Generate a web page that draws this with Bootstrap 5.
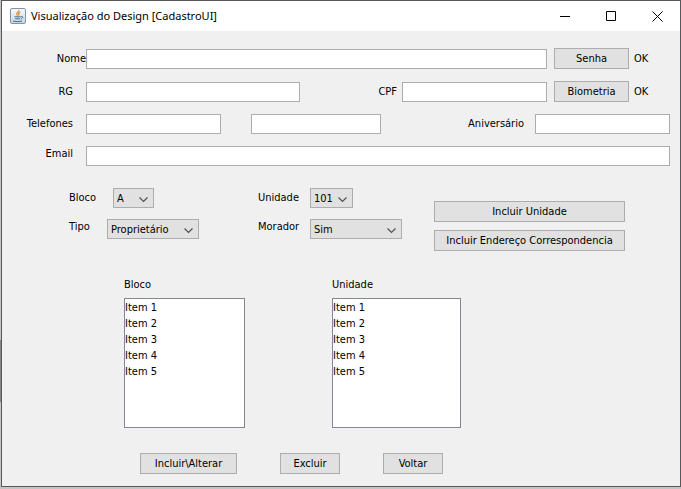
<!DOCTYPE html>
<html lang="pt-BR">
<head>
<meta charset="utf-8">
<meta name="viewport" content="width=device-width, initial-scale=1">
<title>Visualização do Design [CadastroUI]</title>
<link href="https://cdn.jsdelivr.net/npm/bootstrap@5.3.0/dist/css/bootstrap.min.css" rel="stylesheet">
<style>
body{background:linear-gradient(#c4c4c4 0 340px,#858585 340px 402px,#c4c4c4 402px);font:11px/16px Tahoma,"DejaVu Sans Condensed","DejaVu Sans",sans-serif;color:#000;padding:0 0 2px 1px}
.win{background:#f0f0f0;border:1px solid #56585a;min-height:calc(100vh - 2px)}
.titlebar{height:30px;background:#fff;font:11px/16px "Segoe UI","Noto Sans",sans-serif;padding-left:8px;gap:5px}
.caption-btn{width:46px;height:30px;border:0;background:none;padding:0}
.caption-btn svg{display:block;margin:auto}
.form-area{padding:17px 10px 0 0}
.lbl{width:84px;flex:none;padding-right:13px;text-align:right}
.lbl-tight{padding-right:0}
.win .form-control{height:20px;min-height:0;width:auto;min-width:0;border:1px solid #abadb3;border-radius:0;padding:0 3px;font-size:11px;background:#fff}
.win .btn{height:21px;border:1px solid #adadad;border-radius:0;background:#e1e1e1;color:#000;font-size:11px;line-height:16px;padding:2px 4px 1px}
.win .form-select{height:20px;border:1px solid #adadad;border-radius:0;font-size:11px;line-height:16px;color:#000;padding:1px 16px 0 3px;background:#e1e1e1 url("data:image/svg+xml,%3Csvg xmlns='http://www.w3.org/2000/svg' width='9' height='6'%3E%3Cpath d='M.5.5l4 4 4-4' fill='none' stroke='%23505050' stroke-width='1.2'/%3E%3C/svg%3E") no-repeat right 5px top 8px/9px 6px}
.win .side-btn{width:75px;margin-left:7px}
.ok{width:41px;flex:none;padding-left:5px}
.f-row{margin-top:12px}
.f-rg{flex:1 1 214px}
.f-cpf{flex:1 1 145px}
.f-tel{flex:1 1 135px}
.f-tel2{flex:1 1 130px}
.tel-gap{margin-right:30px}
.cpf-lbl{width:102px;flex:none;padding-right:5px}
.aniv-lbl{width:154px;flex:none;padding-right:11px}
.mid{padding:22px 55px 0 67px}
.mid-row{margin-top:11px}
.mid-left{width:189px}
.mid-right{width:176px}
.bloco-lbl{width:44px}
.tipo-lbl{width:38px}
.mid-lbl{width:52px}
.w-tipo{width:92px}
.w-bloco{width:41px}
.w-unid{width:43px}
.wide-btns{flex:1;padding-top:13px}
.lists{padding:26px 0 0 122px;gap:87px}
.lists label{display:block;margin-bottom:5px}
.listbox{display:block;height:130px;border:1px solid #828790;border-radius:0;background:#fff;padding:2px 0 0;overflow:hidden;color:#000;font-size:11px;outline:0}
.listbox option{padding:0;height:16px;min-height:16px;line-height:16px}
.lb-bloco{width:121px}
.lb-unid{width:129px}
.actions{padding:25px 0 12px 138px;gap:43px}
.w-alterar{width:97px}
.w-acao{width:60px}
</style>
<script src="https://cdn.jsdelivr.net/npm/bootstrap@5.3.0/dist/js/bootstrap.bundle.min.js"></script>
</head>
<body>
<div class="win d-flex flex-column">
  <header class="titlebar d-flex align-items-center">
    <svg width="16" height="16" viewBox="0 0 16 16" aria-hidden="true">
      <defs><linearGradient id="tile" x2="0" y2="1"><stop stop-color="#f8fafb"/><stop offset="1" stop-color="#c6d5df"/></linearGradient></defs>
      <rect x=".5" y=".5" width="15" height="15" rx="1.5" fill="url(#tile)" stroke="#8195a3"/>
      <path d="M8.800 2c.6 1.800-2.900 2.500-2.100 4.200.3.600.8.900.9 1.400M10.300 4c-1.600.7-2.200 1.400-1.500 2.200.4.500.1.900-.3 1.300" fill="none" stroke="#e8832a" stroke-width="1.200"/>
      <path d="M4.500 8.800h6.300M5.200 10.800h5M3 13c2.500.8 6.500.8 9 0M11.200 8.500c2.200-.4 2 1.800-.2 2.400" fill="none" stroke="#446b8e"/>
    </svg>
    <span>Visualização do Design [CadastroUI]</span>
    <div class="d-flex ms-auto">
      <button type="button" class="caption-btn" aria-label="Minimizar"><svg width="11" height="11"><path d="M0 5.500h10" stroke="#000"/></svg></button>
      <button type="button" class="caption-btn" aria-label="Maximizar"><svg width="11" height="11"><path d="M.5.500h9v9h-9z" fill="none" stroke="#000"/></svg></button>
      <button type="button" class="caption-btn" aria-label="Fechar"><svg width="11" height="11"><path d="M.5.500l10 10M10.500.500l-10 10" stroke="#000"/></svg></button>
    </div>
  </header>
  <form>
    <div class="form-area">
      <div class="d-flex align-items-center">
        <label class="lbl lbl-tight" for="nome">Nome</label>
        <input class="form-control flex-grow-1" id="nome" type="text">
        <button type="button" class="btn side-btn">Senha</button>
        <span class="ok">OK</span>
      </div>
      <div class="d-flex align-items-center f-row">
        <label class="lbl" for="rg">RG</label>
        <input class="form-control f-rg" id="rg" type="text">
        <label class="cpf-lbl text-end" for="cpf">CPF</label>
        <input class="form-control f-cpf" id="cpf" type="text">
        <button type="button" class="btn side-btn">Biometria</button>
        <span class="ok">OK</span>
      </div>
      <div class="d-flex align-items-center f-row">
        <label class="lbl" for="tel1">Telefones</label>
        <input class="form-control f-tel tel-gap" id="tel1" type="text">
        <input class="form-control f-tel2" id="tel2" type="text" aria-label="Telefone 2">
        <label class="aniv-lbl text-end" for="aniv">Aniversário</label>
        <input class="form-control f-tel" id="aniv" type="text">
      </div>
      <div class="d-flex align-items-start f-row">
        <label class="lbl" for="email">Email</label>
        <input class="form-control flex-grow-1" id="email" type="email">
      </div>
    </div>
    <div class="mid d-flex">
      <div class="mid-left">
        <div class="d-flex align-items-center">
          <label class="bloco-lbl" for="bloco">Bloco</label>
          <select class="form-select w-bloco" id="bloco"><option>A</option></select>
        </div>
        <div class="d-flex align-items-start mid-row">
          <label class="tipo-lbl" for="tipo">Tipo</label>
          <select class="form-select w-tipo" id="tipo"><option>Proprietário</option></select>
        </div>
      </div>
      <div class="mid-right">
        <div class="d-flex align-items-center">
          <label class="mid-lbl" for="unidade">Unidade</label>
          <select class="form-select w-unid" id="unidade"><option>101</option></select>
        </div>
        <div class="d-flex align-items-start mid-row">
          <label class="mid-lbl" for="morador">Morador</label>
          <select class="form-select w-tipo" id="morador"><option>Sim</option></select>
        </div>
      </div>
      <div class="wide-btns d-grid gap-2">
        <button type="button" class="btn">Incluir Unidade</button>
        <button type="button" class="btn">Incluir Endereço Correspondencia</button>
      </div>
    </div>
    <div class="lists d-flex">
      <div>
        <label for="lbBloco">Bloco</label>
        <select class="listbox lb-bloco" id="lbBloco" size="8"><option>Item 1</option><option>Item 2</option><option>Item 3</option><option>Item 4</option><option>Item 5</option></select>
      </div>
      <div>
        <label for="lbUnid">Unidade</label>
        <select class="listbox lb-unid" id="lbUnid" size="8"><option>Item 1</option><option>Item 2</option><option>Item 3</option><option>Item 4</option><option>Item 5</option></select>
      </div>
    </div>
    <div class="actions d-flex">
      <button type="button" class="btn w-alterar">Incluir\Alterar</button>
      <button type="button" class="btn w-acao">Excluir</button>
      <button type="button" class="btn w-acao">Voltar</button>
    </div>
  </form>
</div>
</body>
</html>
